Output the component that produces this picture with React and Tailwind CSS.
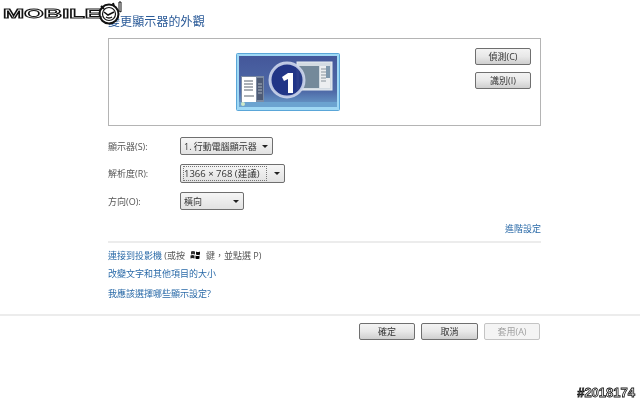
const FONT = '"Open Sans", "Noto Sans CJK TC", "Liberation Sans", sans-serif';

function MonitorArt() {
  return (
    <svg width="104" height="58" viewBox="0 0 104 58" className="block">
      <defs>
        <linearGradient id="desk" x1="0" y1="0" x2="0" y2="1">
          <stop offset="0" stopColor="#44579a" />
          <stop offset="0.7" stopColor="#4f6ba8" />
          <stop offset="1" stopColor="#6a9fcc" />
        </linearGradient>
      </defs>
      <rect x="0.5" y="0.5" width="103" height="57" rx="1" fill="#9fd8f4" stroke="#5aa6d8" />
      <rect x="3" y="3" width="98" height="51" fill="url(#desk)" />
      <rect x="3" y="49" width="98" height="5" fill="#6ba3d0" />
      {/* right window */}
      <rect x="61" y="9" width="35" height="28" fill="#d3dbe2" stroke="#e8edf2" />
      <rect x="63" y="13" width="20" height="22" fill="#74899a" />
      <rect x="84" y="13" width="10" height="22" fill="#eceef0" />
      <path d="M85 16h5M85 19h5M85 22h5M85 25h5M85 28h5" stroke="#8a949c" strokeWidth="1" />
      <rect x="90" y="13" width="4" height="12" fill="#7f98ad" />
      {/* left window */}
      <rect x="5" y="23" width="23" height="26" fill="#7c8ba3" />
      <rect x="6" y="24" width="14" height="25" fill="#ffffff" />
      <path d="M8 28h9M8 31h9M8 34h9M8 37h9M8 43h10" stroke="#58626e" strokeWidth="1" />
      <rect x="21" y="25" width="6" height="22" fill="#4e5b76" />
      <path d="M22 31h4M22 34h4M22 37h4M22 40h4" stroke="#aab4c0" strokeWidth="1" />
      <circle cx="7" cy="51" r="2" fill="#cfe8c8" />
      {/* number badge */}
      <circle cx="51" cy="27" r="17" fill="#1e3184" fillOpacity="0.93" stroke="#cdd6ec" strokeOpacity="0.9" strokeWidth="3" />
      <path d="M46 24l6-4h5v20h-5V26l-4 2z" fill="#ffffff" />
    </svg>
  );
}

function WinFlag() {
  return (
    <svg width="11" height="10" viewBox="0 0 11 10" className="inline-block mx-[5px] align-[-1px]">
      <path d="M1 1.5q2-1 4 0v3q-2-1-4 0z" fill="#333" />
      <path d="M6 1.5q2 1 4 0v3q-2 1-4 0z" fill="#111" />
      <path d="M0.5 5.5q2-1 4 0v3q-2-1-4 0z" fill="#222" />
      <path d="M5.5 5.5q2 1 4 0v3q-2 1-4 0z" fill="#000" />
    </svg>
  );
}

function Btn({ label, className = '', disabled = false }) {
  return (
    <div
      className={`flex items-center justify-center h-[17px] rounded-[2px] border text-[9px] leading-none ${
        disabled
          ? 'border-[#c4c4c4] bg-[#f4f4f4] text-[#a0a0a0]'
          : 'border-[#6f6f6f] bg-gradient-to-b from-[#f3f3f3] via-[#e8e8e8] to-[#cfcfcf] text-[#333]'
      } ${className}`}
    >
      {label}
    </div>
  );
}

function Select({ label, width, focus = false, textSize = 'text-[9px]' }) {
  return (
    <div
      className={`flex items-center rounded-[2px] border border-[#6f6f6f] bg-gradient-to-b from-[#f6f6f6] to-[#e2e2e2] text-[#333] ${width} ${focus ? 'h-[19px]' : 'h-[18px]'}`}
    >
      <div className={`flex-1 flex items-center h-full px-[2px] ${focus ? 'py-[1px]' : ''}`}>
        <span className={`${textSize} leading-none whitespace-nowrap ${focus ? 'border border-dotted border-[#777] h-full w-full flex items-center' : 'pl-[1px]'}`}>{label}</span>
      </div>
      <div className={`flex items-center justify-center h-full ${focus ? 'w-[15px]' : 'w-[14px]'}`}>
        <div className="w-0 h-0 border-x-[3px] border-x-transparent border-t-[3px] border-t-[#222]" />
      </div>
    </div>
  );
}

function Row({ label, children }) {
  return (
    <div className="flex items-center">
      <div className="w-[72px] text-[9px] leading-none text-[#555]">{label}</div>
      {children}
    </div>
  );
}

export default function App() {
  return (
    <div className="relative w-[640px] h-[401px] bg-white overflow-hidden blur-[0.3px]" style={{ fontFamily: FONT }}>
      {/* watermark */}
      <div className="absolute left-[3px] top-[1px] flex items-center z-10">
        <span
          className="inline-block w-[95px] text-[13px] leading-none font-bold tracking-[0px] text-white [-webkit-text-stroke:0.9px_#111] scale-x-[1.95] origin-left"
          style={{ fontFamily: '"Liberation Sans", sans-serif' }}
        >
          MOBILE
        </span>
        <svg width="26" height="24" viewBox="0 0 26 24">
          <circle cx="11" cy="13" r="9.5" fill="#fff" stroke="#111" strokeWidth="2" />
          <circle cx="11" cy="13" r="6.5" fill="#fff" stroke="#111" strokeWidth="1.2" />
          <path d="M6 11l4 3 6-3M8 16q3 2 6 0" fill="none" stroke="#111" strokeWidth="1.5" />
          <path d="M3 5l3 3M15 2l1 3" stroke="#111" strokeWidth="2" />
          <path d="M21 1v9l2 1V1z" fill="#fff" stroke="#111" />
        </svg>
      </div>
      <div className="absolute right-[5px] bottom-[2px] text-[13px] leading-none font-bold text-white [-webkit-text-stroke:0.8px_#111]" style={{ fontFamily: '"Liberation Sans", sans-serif' }}>
        #2018174
      </div>

      <div className="pl-[108px] pr-[99px] pt-[14px]">
        <h1 className="text-[12px] leading-[16px] font-normal text-[#2a5a98] tracking-[0.1px]">變更顯示器的外觀</h1>

        <div className="relative mt-[8px] h-[88px] border border-[#b4b4b4] flex items-start">
          <div className="ml-[127px] mt-[14px]">
            <MonitorArt />
          </div>
          <div className="ml-auto mr-[9px] mt-[9px] flex flex-col gap-[7px]">
            <Btn label="偵測(C)" className="w-[56px]" />
            <Btn label="識別(I)" className="w-[56px]" />
          </div>
        </div>

        <div className="mt-[11px] flex flex-col gap-[9px]">
          <Row label="顯示器(S):">
            <Select label="1. 行動電腦顯示器" width="w-[93px]" />
          </Row>
          <Row label="解析度(R):">
            <Select label="1366 × 768 (建議)" width="w-[105px]" focus textSize="text-[9.5px]" />
          </Row>
          <Row label="方向(O):">
            <Select label="橫向" width="w-[64px]" />
          </Row>
        </div>

        <div className="mt-[14px] text-right text-[9px] leading-none text-[#2a6aa8]">進階設定</div>

        <div className="mt-[8px] border-t-2 border-[#ececec] pt-[7px] flex flex-col gap-[8px] text-[9px] leading-[10px]">
          <div className="text-[#555]">
            <span className="text-[#2a6aa8]">連接到投影機</span> (或按<WinFlag />鍵，並點選 P)
          </div>
          <div className="text-[#2a6aa8]">改變文字和其他項目的大小</div>
          <div className="text-[#2a6aa8] mt-[2px]">我應該選擇哪些顯示設定?</div>
        </div>
      </div>

      <div className="mt-[15px] border-t-2 border-[#ececec] pt-[7px] pr-[100px] flex justify-end gap-[6px]">
        <Btn label="確定" className="w-[56px]" />
        <Btn label="取消" className="w-[57px]" />
        <Btn label="套用(A)" className="w-[56px]" disabled />
      </div>
    </div>
  );
}
